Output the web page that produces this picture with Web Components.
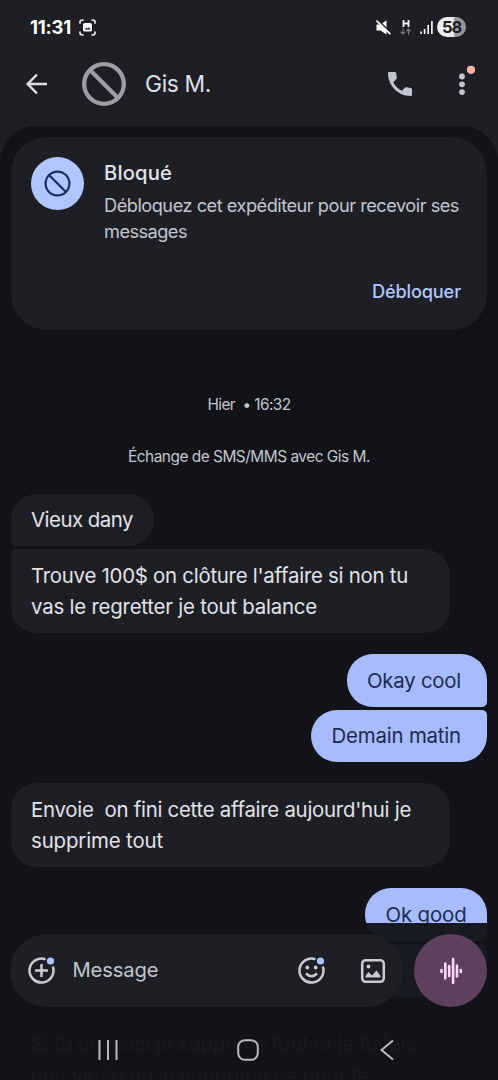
<!DOCTYPE html>
<html lang="fr">
<head>
<meta charset="utf-8">
<title>Messages</title>
<style>
html,body{margin:0;height:100%;background:#111318;overflow:hidden}
body{font-family:Inter,Roboto,"Liberation Sans",sans-serif;color:#e2e2e9}
</style>
</head>
<body>
<messages-app></messages-app>
<script>
function define(name, html, setup) {
  customElements.define(name, class extends HTMLElement {
    constructor() {
      super();
      this.attachShadow({ mode: 'open' }).innerHTML = html;
    }
    connectedCallback() { if (setup) setup(this, this.shadowRoot); }
  });
}

/* One line of text tracked to an exact advance width. */
define('fit-line', `<style>:host{display:block;white-space:pre;width:max-content}</style><slot></slot>`, el => {
  const w = +el.getAttribute('w');
  const natural = el.getBoundingClientRect().width;
  el.style.letterSpacing = ((w - natural) / el.textContent.length).toFixed(3) + 'px';
});

define('status-bar', `<style>
:host{display:flex;align-items:center;height:54px;padding:0 32px 0 30px;box-sizing:border-box;color:#fff}
.time{font-size:18.5px;font-weight:650;line-height:24px}
svg{display:block;flex:none}
.shot{margin-left:8px}.gap{flex:1}
.net{margin-left:9px}.sig{margin-left:8px}
.bat{margin-left:4px;width:29px;height:20px;border-radius:10px;background:linear-gradient(90deg,#ececef 56%,#96979c 62%);color:#1e1f25;font-size:16.5px;font-weight:700;line-height:20px;display:flex;justify-content:center}
</style>
<fit-line class="time" w="41">11:31</fit-line>
<svg class="shot" width="17" height="17" viewBox="0 0 17 17" fill="none" stroke="#eee" stroke-width="1.7" stroke-linecap="round"><path d="M1 4V3.2Q1 1 3.2 1H4M13 1h.8Q16 1 16 3.200V4M16 13v.8q0 2.200-2.200 2.200H13M4 16h-.8Q1 16 1 13.800V13"/><path d="M6 4h5q2 0 2 2v5q0 1.500-2 1.500H6q-2 0-2-1.500V6q0-2 2-2z" fill="#fff" stroke="none"/><path d="M5.500 10.500 7.500 8.500l1.200 1 1-1.200 2 2.200z" fill="#1e1f25" stroke="none"/></svg>
<span class="gap"></span>
<svg width="15" height="15" viewBox="0 0 15 15"><path d="M.5 4.500H4.500L10.500.3V14.600L4.500 10.500H.5z" fill="#fff"/><path d="M1.500 .2 14.500 12.700" stroke="#1e1f25" stroke-width="2.200"/><path d="M1 1.200 13.800 13.600" stroke="#fff" stroke-width="1.700" stroke-linecap="round"/></svg>
<svg class="net" width="12" height="17" viewBox="0 0 12 17" fill="none"><path d="M3.500 1v7M8.500 1v7M3.500 4.500h5" stroke="#f2f2f4" stroke-width="1.800"/><path d="M3 9.500V15M.6 12.800 3 15l2.200-2.200M8.500 15.500V10M6.300 12.200 8.500 10l2.300 2.200" stroke="#77787e" stroke-width="1.200"/></svg>
<svg class="sig" width="13" height="15" viewBox="0 0 13 15" stroke="#fff" stroke-width="1.600"><path d="M1 14v-2.500M4.600 14V9M8.200 14V5M11.900 14V1"/></svg>
<div class="bat"><fit-line w="19">58</fit-line></div>`);

define('chat-header', `<style>
:host{display:flex;align-items:center;height:60px;padding:0 28px 0 26px}
svg{display:block;flex:none;overflow:visible}
.ban{margin-left:33.500px}.name{margin-left:19.500px;flex:1;font-size:22.800px;line-height:30px;color:#dedfe6}
.more{margin-left:42px}
</style>
<svg width="22" height="22" viewBox="0 0 22 22" fill="none" stroke="#dedfe6" stroke-width="2.500"><path d="M21 11H2M11 1.500 1.700 11l9.300 9.500"/></svg>
<svg class="ban" width="44" height="44" viewBox="0 0 44 44" fill="none" stroke="#9c9da6" stroke-width="4.300"><circle cx="22" cy="22" r="19.800"/><path d="m8 8 28 28"/></svg>
<div class="name"><fit-line w="66">Gis M.</fit-line></div>
<svg width="24" height="24" viewBox="3 3 18 18" fill="#c3c5d0"><path d="M3 3.800C3 3.350 3.350 3 4 3H8.200C8.700 3 9 3.300 9.100 3.800L9.600 7.200C9.700 7.700 9.500 8.100 9.200 8.400L7 10.600C8.500 13.500 10.600 15.600 13.400 17L15.600 14.800C15.900 14.500 16.300 14.300 16.800 14.400L20.200 15C20.700 15.100 21 15.400 21 15.900V20c0 .600-.400 1-1 1C10.610 21 3 13.390 3 3.800z"/></svg>
<svg class="more" width="16" height="24" viewBox="0 0 16 24" fill="#c3c5d0"><circle cx="8" cy="4.500" r="2.900"/><circle cx="8" cy="12.300" r="2.900"/><circle cx="8" cy="20.100" r="2.900"/><circle cx="17" cy="-2.200" r="4.100" fill="#ffb4ab"/></svg>`);

define('blocked-card', `<style>
:host{display:flex;flex-direction:column;box-sizing:border-box;height:193px;margin:10.500px 11px 0 10.500px;padding:20.500px 26px 0 20px;border-radius:36px;background:#1e1f25}
.row{display:flex;gap:20.500px}
.dot{width:53px;height:53px;border-radius:50%;background:#b1c5ff;display:grid;place-items:center;flex:none}
h2{margin:0;font-size:20.200px;line-height:32px;font-weight:500}
.body{font-size:18.200px;line-height:26px;color:#c3c5ce;margin-top:3px}
.act{align-self:flex-end;margin-top:34px;font-size:18.200px;line-height:26px;font-weight:500;color:#b1c5ff}
</style>
<div class="row"><div class="dot"><svg width="27" height="27" viewBox="0 0 27 27" fill="none" stroke="#162e60" stroke-width="2.200"><circle cx="13.500" cy="13.500" r="11.900"/><path d="m5 5 17 17"/></svg></div>
<div><h2><fit-line w="68">Bloqué</fit-line></h2><div class="body"><fit-line w="355">Débloquez cet expéditeur pour recevoir ses</fit-line><fit-line w="83">messages</fit-line></div></div></div>
<div class="act"><fit-line w="89">Débloquer</fit-line></div>`);

define('chat-note', `<style>:host{display:flex;justify-content:center;font-size:15.400px;line-height:20px;color:#c3c5ce}</style><slot></slot>`);

define('chat-bubble', `<style>
:host{display:block;box-sizing:border-box;width:max-content;padding:10.500px 20.500px;font-size:20.400px;line-height:31.500px;border-radius:26px;background:#1e1f25;color:#e2e2e9}
:host([wide]){width:439px}
:host([out]){align-self:flex-end;background:#a8bbff;color:#1b2b52;padding-right:26px}
:host([first]){border-bottom-left-radius:5px;margin-bottom:3px}
:host([last]){border-top-left-radius:5px}
:host([out][first]){border-radius:26px 26px 5px 26px}
:host([out][last]){border-radius:26px 5px 26px 26px}
:host([group]){margin-top:21px}
</style><slot></slot>`);

define('composer-bar', `<style>
:host{position:absolute;left:0;right:0;bottom:0;height:157px;box-sizing:border-box;background:linear-gradient(rgba(17,19,24,.957) 55%,rgba(17,19,24,.972) 60%);padding:11px 10px 0}
.row{display:flex;gap:11px}
.field{display:flex;align-items:center;box-sizing:border-box;width:393px;height:73px;border-radius:37px;background:#1e1f25;padding:0 17px 0 17px;color:#c3c5ce;font-size:20.200px}
.text{flex:1;margin-left:16.500px;line-height:28px;margin-top:-1px}
svg{display:block;flex:none;overflow:visible}
.pic{margin-left:34px}
.voice{width:73px;height:73px;border-radius:50%;background:#5e3f5c;display:grid;place-items:center}
nav{display:flex;justify-content:space-between;align-items:center;height:22px;margin-top:32px;padding:0 94px 0 88px}
.home{margin-right:3px}
</style>
<div class="row"><div class="field">
<svg width="29" height="29" viewBox="0 0 29 29" fill="none" stroke="#c9cad3" stroke-width="2.500"><path d="M18.500 3.200A12 12 0 1 0 25.800 10.500M14.500 8v13M8 14.500h13"/><circle cx="23.500" cy="5" r="3.600" fill="#a9c4ff" stroke="none"/></svg>
<div class="text"><fit-line w="86">Message</fit-line></div>
<svg width="29" height="29" viewBox="0 0 29 29" fill="none" stroke="#c9cad3" stroke-width="2.500"><path d="M18.500 3.200A12 12 0 1 0 25.800 10.500M9 17.500q5.500 5.500 11 0"/><g fill="#c9cad3" stroke="none"><circle cx="10.300" cy="11.500" r="1.900"/><circle cx="18.700" cy="11.500" r="1.900"/></g><circle cx="23.500" cy="5" r="3.600" fill="#a9c4ff" stroke="none"/></svg>
<svg class="pic" width="26" height="26" viewBox="0 0 26 26" fill="none" stroke="#c9cad3" stroke-width="2.500"><rect x="2.200" y="2.200" width="21.600" height="21.600" rx="3.500"/><circle cx="8.500" cy="8.500" r="1.900" fill="#c9cad3" stroke="none"/><path d="M5.500 19.500v-1.500l3-4 3.500 3.500 4.500-5 4 5.500v1.500z" fill="#c9cad3" stroke="none"/></svg>
</div><div class="voice"><svg width="24" height="28" viewBox="0 0 24 28" stroke="#ffd6f8" stroke-width="2.600" stroke-linecap="round"><path d="M2.500 13v2M6.300 6.500v15M10.200 9v10M14.100 2v24M18 8.500v11M21.800 13v2"/></svg></div></div>
<nav>
<svg width="20" height="20" viewBox="0 0 20 20" stroke="#b9babf" stroke-width="2"><path d="M1.500 0v20M10 0v20M18.500 0v20"/></svg>
<svg class="home" width="22" height="22" viewBox="0 0 22 22" fill="none" stroke="#b9babf" stroke-width="2"><rect x="1.200" y="1.200" width="19.600" height="19.600" rx="6.500"/></svg>
<svg width="14" height="22" viewBox="0 0 14 22" fill="none" stroke="#b9babf" stroke-width="2"><path d="M13 1.500 1.500 11 13 20.500"/></svg>
</nav>`);

define('messages-app', `<style>
:host{display:block;position:relative;width:498px;height:1080px;overflow:hidden;background:#1e1f25}
header{height:126px}
main{height:954px;border-radius:36px 36px 0 0;background:#111318;display:flow-root;overflow:hidden}
.date{margin-top:65px}.via{margin-top:32.500px}
.list{display:flex;flex-direction:column;align-items:flex-start;padding:0 11px 0 10.500px;margin-top:26.500px}
</style>
<header><status-bar></status-bar><chat-header></chat-header></header>
<main>
<blocked-card></blocked-card>
<chat-note class="date"><fit-line w="83">Hier  • 16:32</fit-line></chat-note>
<chat-note class="via"><fit-line w="242">Échange de SMS/MMS avec Gis M.</fit-line></chat-note>
<div class="list">
<chat-bubble first><fit-line w="102">Vieux dany</fit-line></chat-bubble>
<chat-bubble last wide><fit-line w="377">Trouve 100$ on clôture l'affaire si non tu</fit-line><fit-line w="286">vas le regretter je tout balance</fit-line></chat-bubble>
<chat-bubble out first group><fit-line w="94">Okay cool</fit-line></chat-bubble>
<chat-bubble out last><fit-line w="129.500">Demain matin</fit-line></chat-bubble>
<chat-bubble wide group><fit-line w="380">Envoie  on fini cette affaire aujourd'hui je</fit-line><fit-line w="132">supprime tout</fit-line></chat-bubble>
<chat-bubble out first group style="padding-right:20.500px"><fit-line w="81">Ok good</fit-line></chat-bubble>
<chat-bubble out last style="width:122px;height:53px"></chat-bubble>
<chat-bubble wide group><fit-line w="385">Si tu envoies je supprime tout et je te fais</fit-line><fit-line w="338">une vidéo ou je supprime ça pour te</fit-line></chat-bubble>
</div>
</main>
<composer-bar></composer-bar>`);
</script>
</body>
</html>
